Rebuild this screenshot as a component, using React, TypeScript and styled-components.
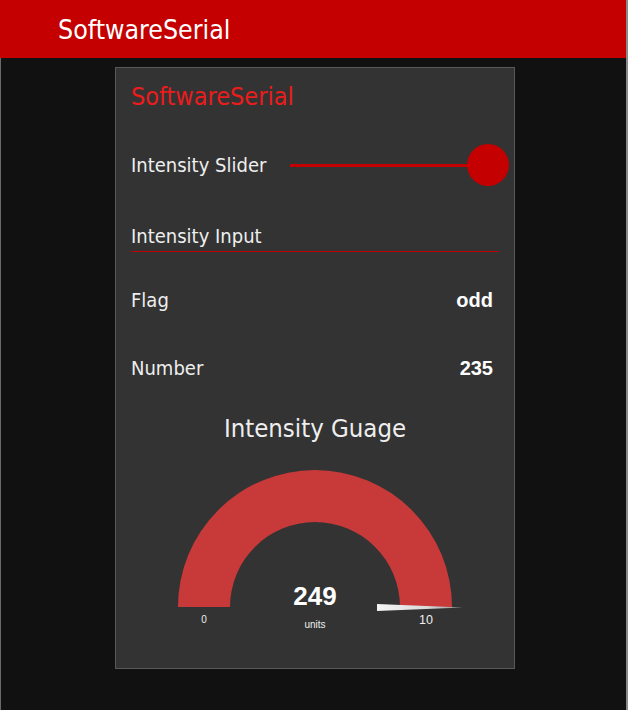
import React from "react";
import styled, { createGlobalStyle } from "styled-components";

const GlobalStyle = createGlobalStyle`
  html, body { margin: 0; padding: 0; background: #111111; }
  body { font-family: "DejaVu Sans Condensed", "DejaVu Sans", sans-serif; }
  * { box-sizing: border-box; }
`;

const Page = styled.div`
  width: 628px;
  min-height: 710px;
  display: flex;
  flex-direction: column;
  border-right: 2px solid #8a8a8a;
  background: #111111;
`;

const Header = styled.header`
  height: 58px;
  background: #c40000;
  display: flex;
  align-items: center;
  padding-left: 58px;
  color: #ffffff;
  font-size: 26.5px;
`;

const Main = styled.main`
  flex: 1;
  border-left: 1px solid #6a6a6a;
  padding: 9px 0 0 114px;
`;

const Card = styled.section`
  width: 400px;
  height: 602px;
  border: 1px solid #585858;
  background: #333333;
  padding: 0 15px;
  display: flex;
  flex-direction: column;
  & > * { flex-shrink: 0; }
`;

const CardTitle = styled.h2`
  margin: 0;
  height: 56px;
  display: flex;
  align-items: center;
  font-weight: normal;
  font-size: 25px;
  color: #ea1c1c;
`;

const Row = styled.div<{ $top: number }>`
  margin-top: ${(p) => p.$top}px;
  height: 48px;
  display: flex;
  align-items: center;
  justify-content: space-between;
`;

const Label = styled.span<{ $width?: number }>`
  font-size: 20px;
  color: #eeeeee;
  ${(p) => (p.$width ? `width: ${p.$width}px; flex: none;` : "")}
`;

const Value = styled.span`
  font-family: "Liberation Sans", Arial, sans-serif;
  font-weight: bold;
  font-size: 20px;
  color: #ffffff;
  padding-right: 6px;
`;

const Track = styled.div`
  position: relative;
  flex: 1;
  height: 3px;
  margin-right: 11px;
  background: #c40000;
`;

const Thumb = styled.div`
  position: absolute;
  right: -21px;
  top: 50%;
  width: 42px;
  height: 42px;
  margin-top: -21px;
  border-radius: 50%;
  background: #c40000;
`;

const InputField = styled.div`
  margin-top: 24px;
  display: flex;
  flex-direction: column;
`;

const InputLabel = styled.div`
  height: 38px;
  display: flex;
  align-items: flex-end;
  padding-bottom: 3px;
  font-size: 20px;
  line-height: 24px;
  color: #eeeeee;
`;

const Underline = styled.div`
  height: 1px;
  background: #c00000;
`;

const GaugeTitle = styled.div`
  margin-top: 22px;
  height: 28px;
  display: flex;
  align-items: center;
  justify-content: center;
  font-size: 25.5px;
  color: #eeeeee;
`;

const GaugeSvg = styled.svg`
  display: block;
  margin-top: 15px;
  font-family: "Liberation Sans", Arial, sans-serif;
`;

function Gauge() {
  const cx = 184;
  const cy = 150;
  const R = 137;
  const r = 85;
  const arc = `M ${cx - R} ${cy} A ${R} ${R} 0 0 1 ${cx + R} ${cy} L ${cx + r} ${cy} A ${r} ${r} 0 0 0 ${cx - r} ${cy} Z`;
  return (
    <GaugeSvg width={368} height={190} viewBox="0 0 368 190">
      <defs>
        <linearGradient id="needle" x1="0" y1="0" x2="1" y2="0">
          <stop offset="0" stopColor="#f6f6f6" />
          <stop offset="0.6" stopColor="#d8d8d8" />
          <stop offset="1" stopColor="#8a8a8a" />
        </linearGradient>
      </defs>
      <path d={arc} fill="#c83a3a" />
      <polygon
        points={`${cx + 62},${cy - 3} ${cx + 148},${cy + 0.5} ${cx + 62},${cy + 4}`}
        fill="url(#needle)"
      />
      <text x={cx} y={cy - 2} textAnchor="middle" fontSize="26" fontWeight="bold" fill="#ffffff">
        249
      </text>
      <text x={cx} y={cy + 21} textAnchor="middle" fontSize="10" fill="#eeeeee">
        units
      </text>
      <text x={cx - 111} y={cy + 16} textAnchor="middle" fontSize="10" fill="#eeeeee">
        0
      </text>
      <text x={cx + 111} y={cy + 17} textAnchor="middle" fontSize="12.5" fill="#eeeeee">
        10
      </text>
    </GaugeSvg>
  );
}

export default function App() {
  return (
    <>
      <GlobalStyle />
      <Page>
        <Header>SoftwareSerial</Header>
        <Main>
          <Card>
            <CardTitle>SoftwareSerial</CardTitle>
            <Row $top={17}>
              <Label $width={159}>Intensity Slider</Label>
              <Track>
                <Thumb />
              </Track>
            </Row>
            <InputField>
              <InputLabel>Intensity Input</InputLabel>
              <Underline />
            </InputField>
            <Row $top={24}>
              <Label>Flag</Label>
              <Value>odd</Value>
            </Row>
            <Row $top={20}>
              <Label>Number</Label>
              <Value>235</Value>
            </Row>
            <GaugeTitle>Intensity Guage</GaugeTitle>
            <Gauge />
          </Card>
        </Main>
      </Page>
    </>
  );
}
